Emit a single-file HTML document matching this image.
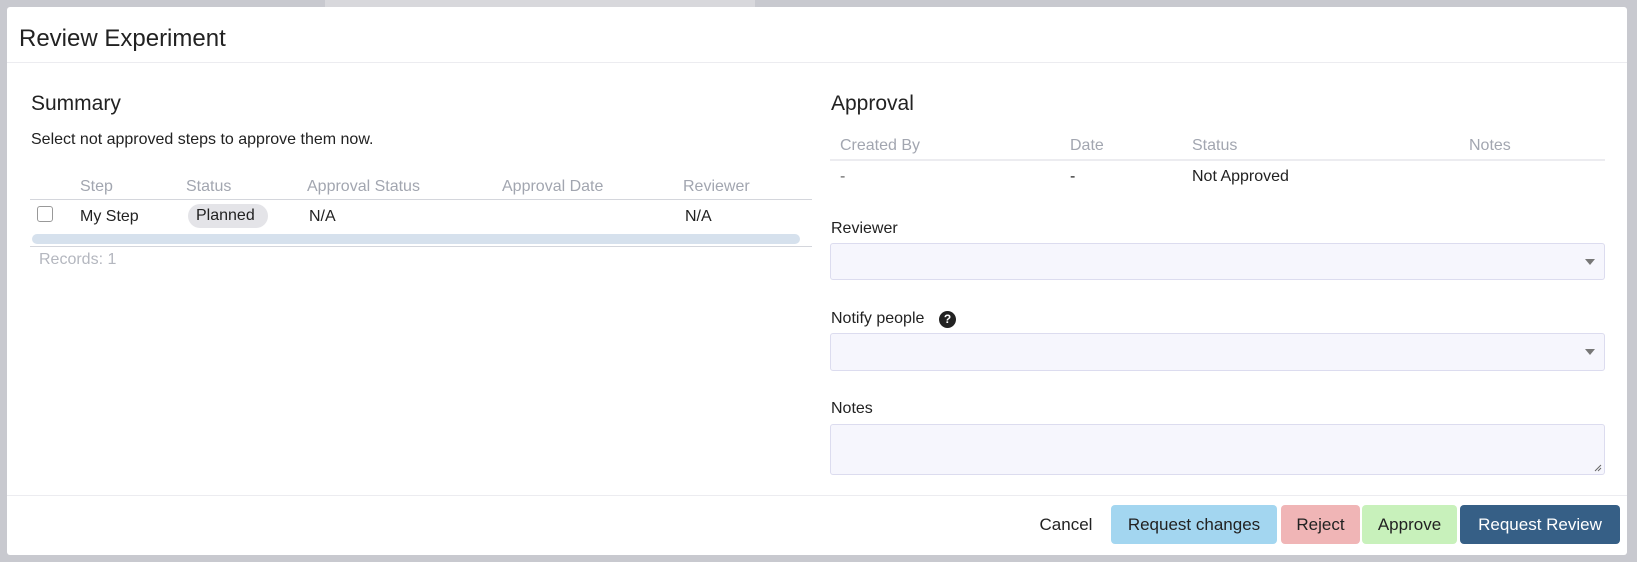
<!DOCTYPE html>
<html><head><meta charset="utf-8"><style>
*{box-sizing:border-box;margin:0;padding:0}
body{width:1637px;height:562px;overflow:hidden;background:#c8c9cf;font-family:"Liberation Sans",sans-serif;color:#222;position:relative}
.abs{position:absolute}
.modal{position:absolute;left:7px;top:7px;width:1620px;height:548px;background:#fff;border-radius:3px}
.t{position:absolute;white-space:nowrap}
.gray{color:#a2a6b0}
.box{position:absolute;background:#f6f6fd;border:1px solid #dcdcef;border-radius:3px}
.arrow{position:absolute;right:9px;top:50%;margin-top:-3px;border-left:5px solid transparent;border-right:5px solid transparent;border-top:6px solid #777}
.btn{position:absolute;top:498px;height:39px;border-radius:4px;font-size:17px;display:flex;align-items:center;justify-content:center}
</style></head><body>
<div class="abs" style="left:325px;top:0;width:430px;height:7px;background:#d8d8dc"></div>
<div class="modal">
 <div class="t" style="left:12px;top:18px;font-size:24px;color:#222">Review Experiment</div>
 <div class="abs" style="left:0;top:55px;width:1620px;height:1px;background:#ececf0"></div>
 <div class="t" style="left:24px;top:85px;font-size:21px">Summary</div>
 <div class="t" style="left:24px;top:124px;font-size:16px">Select not approved steps to approve them now.</div>
 <div class="t gray" style="left:73px;top:171px;font-size:16px">Step</div>
 <div class="t gray" style="left:179px;top:171px;font-size:16px">Status</div>
 <div class="t gray" style="left:300px;top:171px;font-size:16px">Approval Status</div>
 <div class="t gray" style="left:495px;top:171px;font-size:16px">Approval Date</div>
 <div class="t gray" style="left:676px;top:171px;font-size:16px">Reviewer</div>
 <div class="abs" style="left:23px;top:192px;width:782px;height:1px;background:#d4d6dc"></div>
 <div class="abs" style="left:30px;top:199px;width:16px;height:16px;border:1px solid #999;border-radius:3px"></div>
 <div class="t" style="left:73px;top:201px;font-size:16px">My Step</div>
 <div class="abs" style="left:181px;top:197px;width:80px;height:24px;border-radius:12px;background:#e4e4e8"></div>
 <div class="t" style="left:189px;top:200px;font-size:16px">Planned</div>
 <div class="t" style="left:302px;top:201px;font-size:16px">N/A</div>
 <div class="t" style="left:678px;top:201px;font-size:16px">N/A</div>
 <div class="abs" style="left:25px;top:227px;width:768px;height:10px;border-radius:5px;background:#d6e1ed"></div>
 <div class="abs" style="left:23px;top:239px;width:782px;height:1px;background:#d4d6dc"></div>
 <div class="t gray" style="left:32px;top:244px;font-size:16px;color:#b4b7bf">Records: 1</div>

 <div class="t" style="left:824px;top:85px;font-size:21px">Approval</div>
 <div class="t gray" style="left:833px;top:130px;font-size:16px">Created By</div>
 <div class="t gray" style="left:1063px;top:130px;font-size:16px">Date</div>
 <div class="t gray" style="left:1185px;top:130px;font-size:16px">Status</div>
 <div class="t gray" style="left:1462px;top:130px;font-size:16px">Notes</div>
 <div class="abs" style="left:823px;top:152px;width:775px;height:2px;background:#ececf0"></div>
 <div class="t" style="left:833px;top:161px;font-size:16px;color:#666">-</div>
 <div class="t" style="left:1063px;top:161px;font-size:16px">-</div>
 <div class="t" style="left:1185px;top:161px;font-size:16px">Not Approved</div>
 <div class="t" style="left:824px;top:213px;font-size:16px">Reviewer</div>
 <div class="box" style="left:823px;top:236px;width:775px;height:37px"><div class="arrow"></div></div>
 <div class="t" style="left:824px;top:303px;font-size:16px">Notify people</div>
 <div class="abs" style="left:932px;top:304px;width:17px;height:17px;border-radius:50%;background:#222;color:#fff;font-size:12px;font-weight:bold;text-align:center;line-height:17px">?</div>
 <div class="box" style="left:823px;top:326px;width:775px;height:38px"><div class="arrow"></div></div>
 <div class="t" style="left:824px;top:393px;font-size:16px">Notes</div>
 <div class="box" style="left:823px;top:417px;width:775px;height:51px">
  <svg class="abs" style="right:2px;bottom:2px" width="8" height="8"><path d="M1 7L7 1M4 7L7 4" stroke="#666" stroke-width="1"/></svg>
 </div>
 <div class="abs" style="left:0;top:488px;width:1620px;height:1px;background:#ececf0"></div>
 <div class="btn" style="left:1029px;width:60px">Cancel</div>
 <div class="btn" style="left:1104px;width:166px;background:#a3d6f0">Request changes</div>
 <div class="btn" style="left:1274px;width:79px;background:#f0b5b6">Reject</div>
 <div class="btn" style="left:1355px;width:95px;background:#c8f1bb">Approve</div>
 <div class="btn" style="left:1453px;width:160px;background:#365f86;color:#fff">Request Review</div>
</div>
</body></html>
